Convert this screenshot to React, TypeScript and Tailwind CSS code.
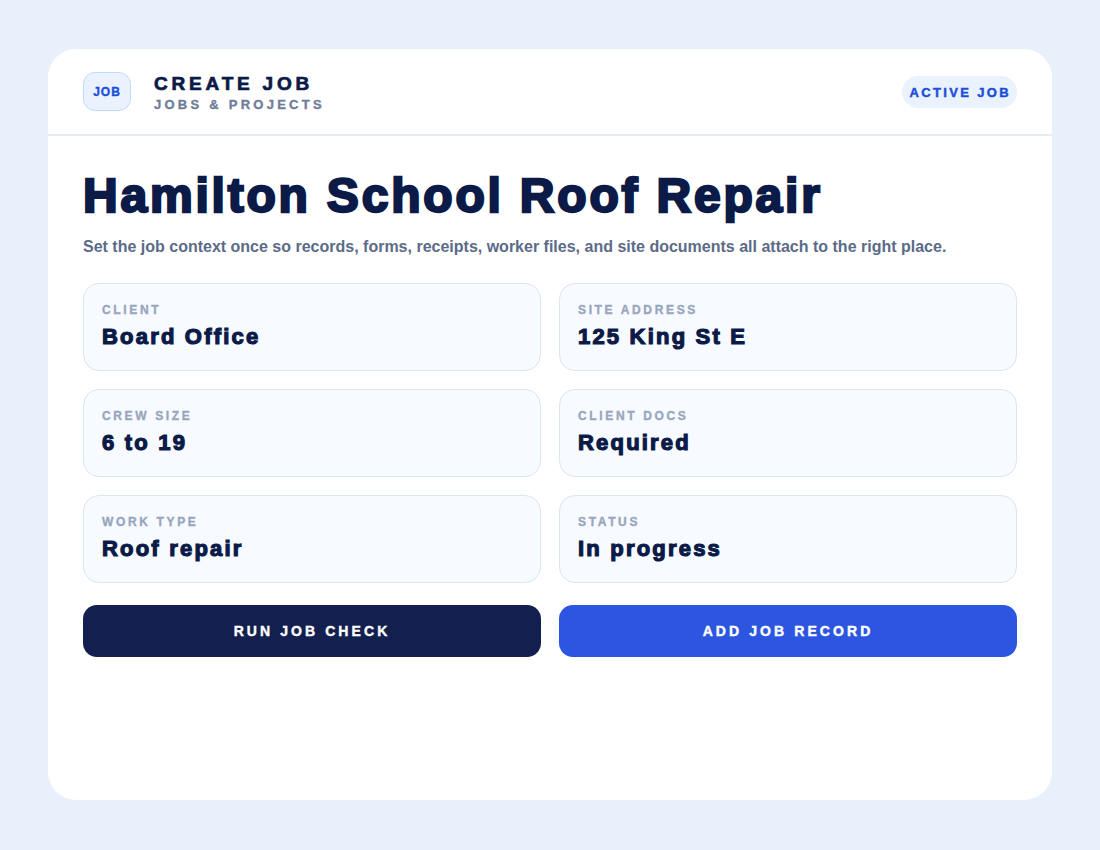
import React from "react";

type Field = { label: string; value: string };

const fields: Field[] = [
  { label: "Client", value: "Board Office" },
  { label: "Site address", value: "125 King St E" },
  { label: "Crew size", value: "6 to 19" },
  { label: "Client docs", value: "Required" },
  { label: "Work type", value: "Roof repair" },
  { label: "Status", value: "In progress" },
];

function FieldCard({ label, value }: Field) {
  return (
    <div className="h-[88px] rounded-[16px] border border-[#dbe5f3] bg-[#f7faff] px-[18px] pt-[18px]">
      <div className="text-[12px] leading-[16px] font-bold uppercase tracking-[0.22em] text-[#98a6bd] [-webkit-text-stroke:0.35px_currentColor]">
        {label}
      </div>
      <div className="mt-[5px] text-[22px] leading-[28px] font-bold tracking-[2.2px] text-[#0b1a47] [-webkit-text-stroke:1.2px_currentColor]">
        {value}
      </div>
    </div>
  );
}

export default function App() {
  return (
    <div
      className="min-h-screen bg-[#e8f0fb] px-12 pt-[49px] pb-12"
      style={{ fontFamily: '"Liberation Sans", Arial, sans-serif' }}
    >
      <div className="h-[751px] w-[1004px] rounded-[28px] bg-white">
        <header className="flex h-[87px] items-center justify-between border-b-2 border-[#e6ecf4] px-[35px]">
          <div className="flex items-center gap-[23px]">
            <div className="flex h-[39px] w-12 items-center justify-center rounded-[12px] border border-[#bfdbfe] bg-[#eaf2ff] text-[12px] font-bold tracking-[0.08em] text-[#1d4ed8] [-webkit-text-stroke:0.35px_currentColor]">
              JOB
            </div>
            <div className="pt-[2px]">
              <div className="text-[19px] leading-[24px] font-bold tracking-[0.2em] text-[#0b1a47] [-webkit-text-stroke:0.7px_currentColor]">
                CREATE JOB
              </div>
              <div className="mt-[1px] text-[13px] leading-[16px] font-bold tracking-[0.25em] text-[#6f7d99] [-webkit-text-stroke:0.35px_currentColor]">
                JOBS &amp; PROJECTS
              </div>
            </div>
          </div>
          <div className="flex h-8 items-center rounded-full bg-[#eaf2ff] pl-2 pr-[6px] pt-[2px] text-[13px] font-bold tracking-[0.18em] text-[#1d4ed8] [-webkit-text-stroke:0.45px_currentColor]">
            ACTIVE JOB
          </div>
        </header>

        <main className="px-[35px] pt-[32px]">
          <h1 className="text-[48px] leading-[56px] font-bold tracking-[2.8px] text-[#0b1a47] [-webkit-text-stroke:2.4px_currentColor]">
            Hamilton School Roof Repair
          </h1>
          <p className="mt-[11px] text-[16px] leading-[24px] font-bold text-[#5b6b88]">
            Set the job context once so records, forms, receipts, worker files, and site documents all attach to the right place.
          </p>

          <div className="mt-[24px] grid grid-cols-2 gap-x-[18px] gap-y-[18px]">
            {fields.map((f) => (
              <FieldCard key={f.label} {...f} />
            ))}
          </div>

          <div className="mt-[22px] grid grid-cols-2 gap-x-[18px]">
            <button className="h-[52px] rounded-[14px] bg-[#13204f] text-[14px] font-bold tracking-[0.22em] text-white [-webkit-text-stroke:0.4px_currentColor]">
              RUN JOB CHECK
            </button>
            <button className="h-[52px] rounded-[14px] bg-[#2d56e0] text-[14px] font-bold tracking-[0.22em] text-white [-webkit-text-stroke:0.4px_currentColor]">
              ADD JOB RECORD
            </button>
          </div>
        </main>
      </div>
    </div>
  );
}
